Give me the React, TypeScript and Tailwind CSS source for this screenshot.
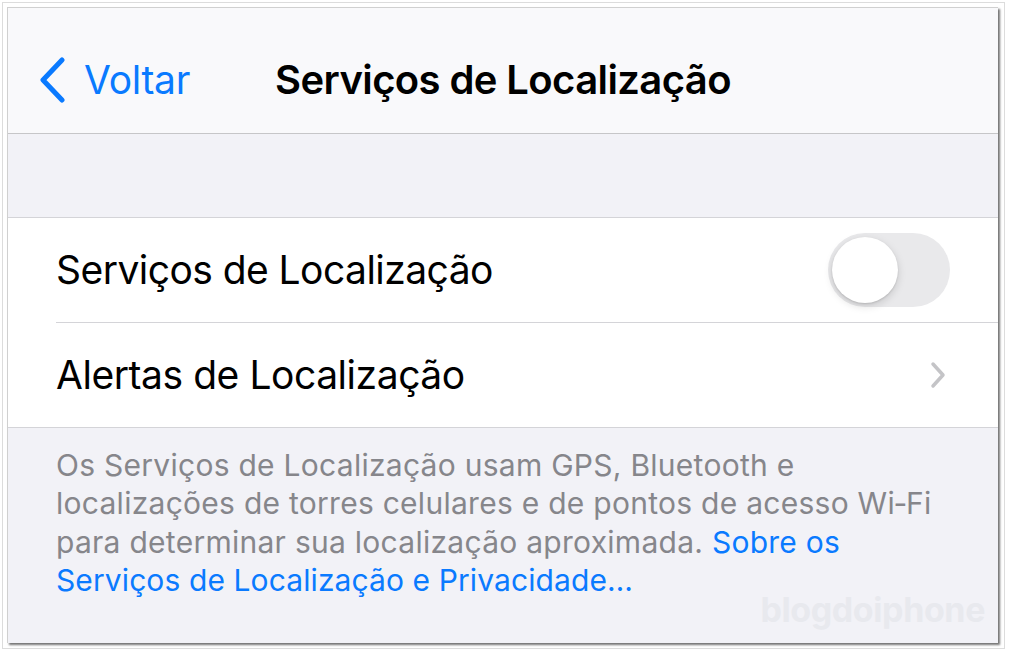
import React from "react";

export default function App() {
  return (
    <div className="w-[1010px] h-[654px] bg-white overflow-hidden" style={{ fontFamily: "Inter, 'Noto Sans', sans-serif" }}>
      <div className="ml-[2px] mt-[2px] w-[1003px] h-[647px] border border-[#dcdcdc] bg-white pl-[4px] pt-[4px]">
        <div className="w-[991px] h-[636px] border-l border-t border-[#d0d0d0] shadow-[2px_2px_2px_rgba(0,0,0,0.55)] flex flex-col bg-[#f2f2f7]">
          {/* nav bar */}
          <div className="h-[126px] shrink-0 bg-[#f9f9fb] border-b border-[#c6c6c8] relative flex items-center pt-[18px]">
            <div className="flex items-center pl-[30px] text-[#0a7aff]">
              <svg width="30" height="46" viewBox="0 0 30 46" className="mr-[16px]">
                <path d="M24 3 L5 23 L24 43" fill="none" stroke="#0a7aff" strokeWidth="5" strokeLinecap="round" strokeLinejoin="round" />
              </svg>
              <span className="text-[39px] leading-none tracking-[-0.3px]">Voltar</span>
            </div>
            <div className="absolute inset-0 pt-[18px] flex items-center justify-center pointer-events-none">
              <span className="text-[40px] font-semibold text-black leading-none tracking-[-0.6px]">Serviços de Localização</span>
            </div>
          </div>
          {/* spacer */}
          <div className="h-[84px] shrink-0 border-b border-[#d4d4d8]" />
          {/* group */}
          <div className="bg-white shrink-0 border-b border-[#d4d4d8]">
            <div className="h-[104px] flex items-center pl-[48px] pr-[48px]">
              <div className="flex-1 h-full flex items-center justify-between">
                <span className="text-[39px] text-black tracking-[-0.55px]">Serviços de Localização</span>
                <div className="w-[122px] h-[74px] rounded-full bg-[#e9e9eb] relative">
                  <div className="absolute left-[4px] top-[4px] w-[66px] h-[66px] rounded-full bg-white shadow-[0_3px_8px_rgba(0,0,0,0.15),0_1px_2px_rgba(0,0,0,0.12)]" />
                </div>
              </div>
            </div>
            <div className="ml-[48px] h-px bg-[#d4d4d8]" />
            <div className="h-[104px] flex items-center pl-[48px] pr-[52px] justify-between">
              <span className="text-[39px] text-black tracking-[-0.45px]">Alertas de Localização</span>
              <svg width="16" height="28" viewBox="0 0 16 28">
                <path d="M3 3 L13 14 L3 25" fill="none" stroke="#c4c4c7" strokeWidth="3.5" strokeLinecap="round" strokeLinejoin="round" />
              </svg>
            </div>
          </div>
          {/* footer */}
          <div className="flex-1 relative pl-[48px] pr-[20px] pt-[18px]">
            <p className="text-[30px] leading-[38.3px] text-[#86868b] tracking-[0.27px] whitespace-nowrap">
              Os Serviços de Localização usam GPS, Bluetooth e<br />
              localizações de torres celulares e de pontos de acesso Wi‑Fi<br />
              para determinar sua localização aproximada.{" "}
              <span className="text-[#0a7aff]">Sobre os</span>
              <br />
              <span className="text-[#0a7aff] tracking-[0.1px]">Serviços de Localização e Privacidade…</span>
            </p>
            <div className="absolute right-[13px] bottom-[16px] text-[34px] font-bold text-[#e8e9ee] tracking-[-0.4px] leading-none">
              blogdoiphone
            </div>
          </div>
        </div>
      </div>
    </div>
  );
}
